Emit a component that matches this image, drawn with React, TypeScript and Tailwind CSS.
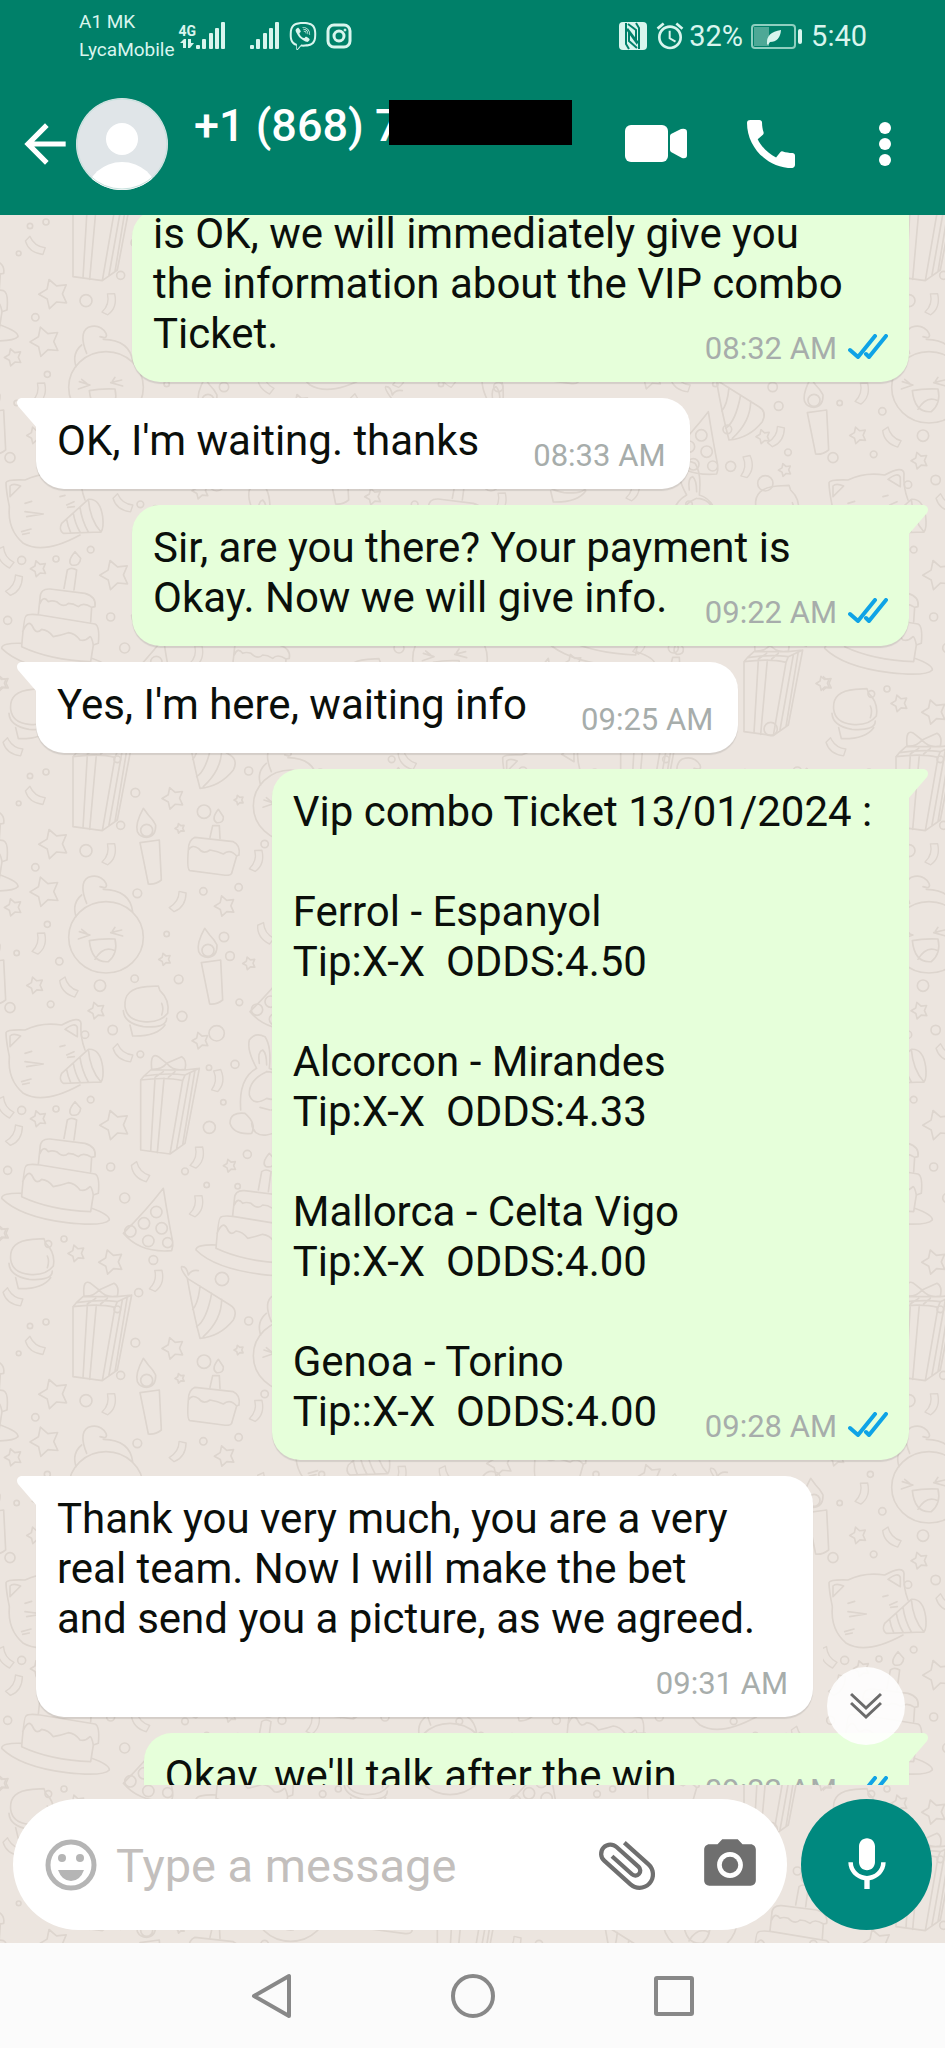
import type { ReactNode } from 'react';
import { FaViber } from 'react-icons/fa';
import {
  MdAlarm,
  MdArrowBack,
  MdAttachFile,
  MdCall,
  MdMic,
  MdPhotoCamera,
} from 'react-icons/md';

type Message = {
  id: number;
  out: boolean;
  text: string;
  time: string;
  size?: string;
  cut?: boolean;
};

const MESSAGES: Message[] = [
  {
    id: 1,
    out: true,
    cut: true,
    size: 'w-full',
    text: 'is OK, we will immediately give you\nthe information about the VIP combo\nTicket.',
    time: '08:32 AM',
  },
  { id: 2, out: false, text: "OK, I'm waiting. thanks", time: '08:33 AM' },
  {
    id: 3,
    out: true,
    text: 'Sir, are you there? Your payment is Okay. Now we will give info.',
    time: '09:22 AM',
  },
  { id: 4, out: false, text: "Yes, I'm here, waiting info", time: '09:25 AM' },
  {
    id: 5,
    out: true,
    size: 'min-w-[73%]',
    text: [
      'Vip combo Ticket 13/01/2024 :',
      '',
      'Ferrol - Espanyol',
      'Tip:X-X  ODDS:4.50',
      '',
      'Alcorcon - Mirandes',
      'Tip:X-X  ODDS:4.33',
      '',
      'Mallorca - Celta Vigo',
      'Tip:X-X  ODDS:4.00',
      '',
      'Genoa - Torino',
      'Tip::X-X  ODDS:4.00',
    ].join('\n'),
    time: '09:28 AM',
  },
  {
    id: 6,
    out: false,
    text: 'Thank you very much, you are a very\nreal team. Now I will make the bet\nand send you a picture, as we agreed.',
    time: '09:31 AM',
  },
  { id: 7, out: true, text: "Okay, we'll talk after the win", time: '09:32 AM' },
];

/* ---------- wallpaper ---------- */

const TILE_W = 2469;
const TILE_H = 1650;

const SHAPES: Record<string, { cx: number; cy: number; d: string }> = {
  cat: {
    cx: 150,
    cy: 115,
    d: 'M28 110Q18 60 18 38Q20 28 75 30Q125 5 185 15Q240 -15 243 10Q240 50 255 90M28 110Q22 180 70 220Q130 255 240 195M30 80V48Q40 38 62 48ZM195 28Q225 5 232 22V50ZM75 100l20 -6M75 125l55 7l-50 8M65 185l28 -8M68 193l20 -4M180 80l15 -4M200 105l22 -10M203 112l20 -2M265 88L185 160Q175 180 190 190L303 186M265 88Q300 85 308 140Q312 175 303 186M265 88Q270 150 303 186M240 112Q245 150 265 186M220 130q5 30 20 56M200 148q3 20 12 40',
  },
  cake: {
    cx: 165,
    cy: 430,
    d: 'M66 520Q5 518 5 535Q60 590 200 608Q310 620 328 600Q330 585 275 565M65 530Q72 440 78 438Q85 430 120 435L285 462Q300 468 295 520L280 525L272 575Q150 570 65 530M68 485Q85 445 98 470Q108 495 125 478Q145 480 160 500Q185 495 205 488Q225 490 240 510Q255 515 270 500Q275 500 280 525M115 432L120 385Q120 355 150 357L255 370Q290 380 285 410L275 412L272 455M120 400Q130 375 145 395Q155 390 170 395Q190 415 205 400Q220 400 235 410Q250 395 275 412M192 355L202 300Q215 290 230 300L222 360M225 245Q200 275 215 285Q240 290 242 265Z',
  },
  gift: {
    cx: 510,
    cy: 255,
    d: 'M422 180V390L510 402L555 370L598 145L555 165Q500 158 432 168L422 180Q500 170 548 182L555 165M548 182L510 402M465 175L452 394M492 175L472 398M570 160L530 385M585 150L548 375M432 168L452 150H555L598 145M465 172L490 155M505 172L525 155M455 148Q450 95 475 110L500 130L545 110Q562 120 555 148Q520 155 500 130Q485 150 455 148',
  },
  macaron: {
    cx: 438,
    cy: 812,
    d: 'M375 800Q370 745 440 740L475 738L480 752Q510 780 503 820Q480 850 430 845Q380 840 375 800M370 812Q372 850 430 860Q500 865 500 835M390 855L398 888Q470 890 495 855M485 790Q492 805 485 825',
  },
  pizza: {
    cx: 445,
    cy: 600,
    d: 'M490 505Q440 570 370 640Q420 700 515 692Q520 680 518 665Q505 600 490 505ZM452 576a17 17 0 1 0 34 0a17 17 0 1 0 -34 0M415 610a17 17 0 1 0 34 0a17 17 0 1 0 -34 0M468 625a17 17 0 1 0 34 0a17 17 0 1 0 -34 0M374 634a17 17 0 1 0 34 0a17 17 0 1 0 -34 0M428 663a17 17 0 1 0 34 0a17 17 0 1 0 -34 0M488 668a15 15 0 1 0 30 0a15 15 0 1 0 -30 0',
  },
  candle: {
    cx: 448,
    cy: 320,
    d: 'M430 205Q405 250 412 275Q420 292 440 292Q468 290 467 255Q460 240 445 225ZM422 271a18 18 0 1 0 36 0a18 18 0 1 0 -36 0M420 308L478 300L484 420Q465 435 445 432Z',
  },
  face: {
    cx: 318,
    cy: 555,
    d: 'M206 592a112 107 0 1 0 224 0a112 107 0 1 0 -224 0M260 490Q235 430 265 412Q300 400 318 430Q325 448 300 440M310 448Q390 450 398 515M245 465Q215 490 228 530M238 575L270 585L235 597M245 568l15 12M365 570L332 578L368 588M345 562l-8 12M268 602Q300 595 345 597Q355 640 325 665Q275 670 268 602ZM285 658Q310 615 345 632',
  },
  slice: {
    cx: 640,
    cy: 305,
    d: 'M565 330Q565 300 585 292L700 305Q722 315 717 345L710 348L695 400Q690 408 670 405L570 392Q560 390 565 330Q575 312 595 325Q610 345 630 330Q655 335 670 342Q690 325 710 348M630 292l8 -35h20l2 38M655 208Q632 238 650 248Q672 250 670 230Z',
  },
  hat: {
    cx: 628,
    cy: 850,
    d: 'M562 775Q580 880 600 955Q660 950 700 900Q715 870 690 855ZM600 798Q595 850 578 868M635 820Q620 900 590 920M665 838Q665 900 610 950M562 775Q540 745 545 740Q560 738 565 765Q575 748 595 752',
  },
  bunny: {
    cx: 780,
    cy: 200,
    d: 'M770 145Q740 90 748 60Q765 35 795 50Q815 80 808 145M778 130Q772 95 788 90Q800 100 800 135M770 145Q715 175 722 270M808 145Q860 160 872 250Q880 330 800 345Q760 350 755 310M800 155Q745 180 748 225Q760 260 800 235Q850 250 855 200Q840 155 800 155M735 280Q690 275 690 310Q700 345 755 340Q770 310 735 280M780 262l30 8M835 262l-20 8',
  },
};

// shape name, centre x, centre y
const PLACED: [string, number, number][] = [
  ['cat', 150, 955],
  ['cake', 165, 1270],
  ['gift', 510, 1095],
  ['gift', 307, 1775],
  ['macaron', 438, 812],
  ['macaron', 95, 1570],
  ['pizza', 445, 1440],
  ['candle', 448, 320],
  ['candle', 632, 680],
  ['face', 318, 555],
  ['slice', 640, 305],
  ['hat', 628, 1690],
  ['bunny', 780, 1040],
  ['cake', 748, 1425],
  ['face', 872, 160],
  ['pizza', 825, 775],
  ['cat', 1010, 480],
  ['candle', 1010, 830],
  ['gift', 1060, 1140],
  ['macaron', 1100, 1480],
  ['slice', 1180, 180],
  ['hat', 1240, 700],
  ['cake', 1330, 1000],
  ['face', 1350, 1370],
  ['gift', 1400, 330],
  ['bunny', 1480, 700],
  ['candle', 1560, 1180],
  ['pizza', 1600, 1500],
  ['cat', 1640, 130],
  ['slice', 1680, 480],
  ['macaron', 1700, 860],
  ['cake', 1800, 1250],
  ['hat', 1880, 330],
  ['gift', 1950, 60],
  ['slice', 2020, 1450],
  ['pizza', 2080, 760],
  ['bunny', 2070, 970],
  ['hat', 2215, 645],
  ['candle', 2450, 680],
  ['macaron', 2330, 960],
  ['gift', 2320, 1490],
  ['face', 2100, 200],
  ['cake', 2360, 270],
  ['cat', 2180, 1200],
];

// x, y, radius
const STARS: [number, number, number][] = [
  [162, 312, 46], [136, 455, 46], [40, 502, 27], [520, 175, 34], [540, 265, 15],
  [717, 180, 15], [675, 498, 32], [495, 658, 19], [748, 670, 20], [106, 736, 26],
  [290, 812, 26], [602, 902, 26], [116, 1136, 25], [345, 1155, 46], [690, 1277, 20],
  [230, 1540, 26], [334, 1566, 38], [5, 1480, 24], [900, 640, 28], [930, 1000, 22],
  [1180, 420, 34], [1120, 920, 26], [1500, 520, 40], [1240, 1230, 30], [1460, 1130, 28],
  [1790, 720, 34], [1480, 120, 28], [1800, 1010, 24], [1950, 560, 38], [1720, 1420, 28],
  [2355, 840, 20], [2290, 740, 22], [2200, 400, 34], [2470, 1480, 22], [2370, 1160, 44],
  [1960, 1180, 30], [2230, 1020, 22], [1270, 1560, 30], [880, 1580, 28],
];

// x, y, rotation
const STREAMERS: [number, number, number][] = [
  [105, 168, 0], [328, 342, 250], [535, 485, 265], [770, 362, 250], [118, 610, 250],
  [205, 742, 10], [795, 580, 20], [368, 940, 0], [652, 1022, 240], [44, 1186, 265],
  [592, 1252, 250], [420, 1296, 10], [590, 1398, 250], [470, 1622, 250], [38, 1672, 0],
  [15, 1102, 20], [930, 350, 30], [1200, 560, 250], [1080, 640, 0], [1340, 560, 20],
  [1500, 940, 250], [1220, 60, 10], [1540, 320, 265], [1660, 680, 10], [1900, 900, 250],
  [1480, 1560, 0], [1940, 730, 20], [2330, 740, 265], [2240, 830, 240], [2040, 580, 0],
  [2240, 120, 20], [1700, 1000, 0], [1920, 1360, 250], [2400, 1340, 10], [940, 1300, 250],
];

// x, y, radius
const DOTS: [number, number, number][] = [
  [352, 58, 10], [138, 96, 9], [90, 108, 8], [56, 190, 7], [406, 158, 13], [362, 256, 12],
  [258, 332, 18], [106, 382, 11], [612, 215, 20], [746, 93, 12], [794, 312, 11], [716, 442, 11],
  [610, 454, 11], [412, 460, 13], [142, 553, 9], [500, 582, 8], [672, 591, 14], [690, 648, 13],
  [178, 664, 11], [50, 639, 8], [404, 716, 11], [300, 737, 17], [536, 718, 13], [152, 793, 10],
  [30, 803, 15], [546, 829, 15], [718, 787, 10], [338, 870, 14], [255, 884, 11], [650, 880, 23],
  [421, 943, 10], [627, 983, 8], [705, 973, 12], [670, 1087, 8], [628, 1162, 18], [272, 1079, 10],
  [65, 1111, 12], [168, 1107, 9], [23, 1291, 12], [332, 1281, 12], [374, 1374, 15], [555, 1294, 10],
  [742, 1243, 12], [620, 1335, 8], [713, 1339, 8], [460, 1560, 13], [192, 1497, 9], [145, 1512, 10],
  [666, 1617, 20], [416, 1658, 12],
];

function starPath(r: number) {
  const pts: string[] = [];
  for (let i = 0; i < 10; i++) {
    const a = (Math.PI / 5) * i - 1.9;
    const len = i % 2 === 0 ? r : r * 0.55;
    pts.push(`${(Math.cos(a) * len).toFixed(1)} ${(Math.sin(a) * len).toFixed(1)}`);
  }
  return `M${pts.join('L')}Z`;
}

function Wallpaper() {
  return (
    <svg className="absolute inset-0 h-full w-full" aria-hidden="true">
      <defs>
        <g id="party">
          {PLACED.map(([name, x, y], i) => (
            <path
              key={i}
              d={SHAPES[name].d}
              transform={`translate(${x - SHAPES[name].cx} ${y - SHAPES[name].cy})`}
            />
          ))}
          {STARS.map(([x, y, r], i) => (
            <path key={i} d={starPath(r)} transform={`translate(${x} ${y})`} />
          ))}
          {STREAMERS.map(([x, y, rot], i) => (
            <path
              key={i}
              d="M-34 -18L-18 -34Q-2 2 36 6L28 30Q-22 24 -34 -18Z"
              transform={`translate(${x} ${y}) rotate(${rot}) scale(0.85)`}
            />
          ))}
          {[0, 823, 1646].map((shift) =>
            DOTS.map(([x, y, r], i) => (
              <circle key={`${shift}-${i}`} cx={x + shift} cy={y} r={r} />
            ))
          )}
        </g>
        <pattern
          id="tile"
          width={TILE_W}
          height={TILE_H}
          patternUnits="userSpaceOnUse"
          patternTransform="translate(0 -25) scale(0.33333)"
        >
          <g fill="none" stroke="#ddd5ce" strokeWidth="5" strokeLinejoin="round" strokeLinecap="round">
            <use href="#party" />
            <use href="#party" y={-TILE_H} />
            <use href="#party" x={-TILE_W} />
            <use href="#party" x={-TILE_W} y={-TILE_H} />
          </g>
        </pattern>
      </defs>
      <rect width="100%" height="100%" fill="url(#tile)" />
    </svg>
  );
}

/* ---------- status bar ---------- */

function SignalBars() {
  return (
    <svg className="h-7 w-[30px]" viewBox="0 0 30 28" fill="currentColor" aria-hidden="true">
      <rect x="0" y="23" width="4" height="4" rx="1" />
      <rect x="6" y="17" width="4" height="10" rx="1" />
      <rect x="13" y="11" width="4" height="16" rx="1" />
      <rect x="19" y="6" width="4" height="21" rx="1" />
      <rect x="25" y="0" width="4" height="27" rx="1" />
    </svg>
  );
}

function StatusBar() {
  return (
    <div className="flex h-[72px] items-center justify-between pr-[78px] pl-[79px] text-[#d9f5ee]">
      <div className="flex items-center">
        <div className="text-[19px] leading-7">
          <p>A1 MK</p>
          <p>LycaMobile</p>
        </div>
        <div className="ml-1 flex flex-col items-center">
          <span className="text-[14px] leading-[15px] font-bold">4G</span>
          <svg className="h-[10px] w-[14px]" viewBox="0 0 14 10" fill="currentColor" aria-hidden="true">
            <path d="M0 4L4 0H6V9H3V4Z M8 0H11V4H14L10 9H8Z" />
          </svg>
        </div>
        <SignalBars />
        <div className="ml-6 flex items-center gap-[9px]">
          <SignalBars />
          <FaViber className="h-[30px] w-[28px]" />
          <svg className="h-[26px] w-[26px]" viewBox="0 0 26 26" fill="none" stroke="currentColor" strokeWidth="3" aria-hidden="true">
            <rect x="2" y="2" width="22" height="22" rx="6" />
            <circle cx="13" cy="13" r="5" />
            <circle cx="19" cy="7" r="1" strokeWidth="1" fill="currentColor" />
          </svg>
        </div>
      </div>
      <div className="flex items-center text-[29px] leading-9">
        <svg className="h-7 w-7" viewBox="0 0 28 28" aria-hidden="true">
          <rect width="28" height="28" rx="4" fill="currentColor" />
          <path
            d="M7 1V22L10 27M7 6L17 20V8L9 2M20 27V6L17 1M20 22L10 9V19L18 26"
            fill="none"
            stroke="#008069"
            strokeWidth="2"
          />
        </svg>
        <MdAlarm className="ml-[7px] h-8 w-8" />
        <span className="ml-[3px]">32%</span>
        <svg className="ml-2 h-[25px] w-[51px]" viewBox="0 0 51 25" aria-hidden="true">
          <rect x="1" y="1" width="43" height="23" rx="3" fill="none" stroke="#8fcfc0" strokeWidth="2" />
          <rect x="3" y="3" width="15" height="19" fill="#4ea896" />
          <path d="M16 20Q15 8 30 6Q29 18 19 18L17 21Z" fill="currentColor" />
          <rect x="47" y="5" width="4" height="15" rx="2" fill="currentColor" />
        </svg>
        <span className="ml-[9px]">5:40</span>
      </div>
    </div>
  );
}

/* ---------- header ---------- */

function ChatHeader() {
  return (
    <div className="flex h-[143px] items-center pr-[30px] pl-[14px] text-white">
      <button type="button" aria-label="Back" className="shrink-0">
        <MdArrowBack className="h-[62px] w-[62px]" />
      </button>
      <svg className="h-[92px] w-[92px] shrink-0" viewBox="0 0 92 92" aria-hidden="true">
        <clipPath id="avatar">
          <circle cx="46" cy="46" r="46" />
        </clipPath>
        <g clipPath="url(#avatar)">
          <rect width="92" height="92" fill="#e0e5e8" />
          <circle cx="46" cy="41" r="16" fill="#fff" />
          <ellipse cx="46" cy="96" rx="35" ry="32" fill="#fff" />
        </g>
        <circle cx="46" cy="46" r="45" fill="none" stroke="#c5e0dc" strokeWidth="1" />
      </svg>
      <div className="ml-[26px] flex min-w-0 flex-1 items-center pb-[42px]">
        <h1 className="pt-[6px] text-[45px] leading-[52px] font-medium whitespace-nowrap">+1 (868) 7</h1>
        <span className="-ml-[12px] h-[45px] w-[183px] bg-black" />
      </div>
      <div className="flex items-center gap-[52px]">
        <button type="button" aria-label="Video call">
          <svg className="h-[37px] w-[62px]" viewBox="0 0 62 37" fill="currentColor" aria-hidden="true">
            <rect width="43" height="37" rx="6" />
            <path d="M45 11Q45 10 46 9L56 4Q62 3 62 7V30Q62 34 57 33L46 27Q45 26 45 25Z" />
          </svg>
        </button>
        <button type="button" aria-label="Voice call">
          <MdCall className="h-16 w-16" />
        </button>
        <button type="button" aria-label="More options" className="flex w-[60px] justify-center">
          <svg className="h-11 w-3" viewBox="0 0 12 44" fill="currentColor" aria-hidden="true">
            <circle cx="6" cy="6" r="6" />
            <circle cx="6" cy="22" r="6" />
            <circle cx="6" cy="38" r="6" />
          </svg>
        </button>
      </div>
    </div>
  );
}

/* ---------- messages ---------- */

function ReadTicks() {
  return (
    <svg
      className="h-[25px] w-10"
      viewBox="0 0 40 25"
      fill="none"
      stroke="#0fa3e6"
      strokeWidth="4"
      strokeLinecap="round"
      strokeLinejoin="round"
      role="img"
      aria-label="Read"
    >
      <path d="M2 16L10 23L27 2" />
      <path d="M18 20L21 23L38 2" />
    </svg>
  );
}

function Bubble({ message }: { message: Message }) {
  const { out, cut, size, text, time } = message;
  const side = out
    ? 'self-end bg-[#e6ffda] rounded-l-[28px] rounded-br-[28px]'
    : 'self-start bg-white rounded-r-[28px] rounded-bl-[28px]';

  return (
    <div
      className={`relative max-w-[89%] px-[21px] pb-[15px] shadow-[0_2px_1px_rgba(0,0,0,0.1)] ${side} ${
        cut ? '-mt-[6px]' : 'pt-[18px]'
      } ${size ?? ''}`}
    >
      {!cut && (
        <svg
          className={`absolute top-0 h-[30px] w-5 ${
            out ? '-right-[19px] -scale-x-100 text-[#e6ffda]' : '-left-[19px] text-white'
          }`}
          viewBox="0 0 20 30"
          fill="currentColor"
          aria-hidden="true"
        >
          <path d="M20 0H4Q-2 2 1 8L20 30Z" />
        </svg>
      )}
      <p className="text-[42px] leading-[50px] whitespace-pre-wrap text-[#0b0f0b]">
        {text}
        <span
          className={`float-right mt-[22px] flex items-baseline gap-[11px] text-[31px] leading-9 text-[#a7adab] ${
            out ? 'ml-7' : 'mr-1 ml-[54px]'
          }`}
        >
          {time}
          {out && <ReadTicks />}
        </span>
      </p>
    </div>
  );
}

/* ---------- composer ---------- */

function Composer() {
  return (
    <form className="relative flex gap-[14px] px-[13px] pt-[14px] pb-[13px]">
      <div className="flex h-[131px] min-w-0 flex-1 items-center rounded-full bg-white pr-[26px] pl-8">
        <button type="button" aria-label="Emoji" className="shrink-0">
          <svg className="h-[52px] w-[52px]" viewBox="0 0 52 52" fill="#b5b5b5" aria-hidden="true">
            <circle cx="26" cy="26" r="23" fill="none" stroke="#b5b5b5" strokeWidth="5" />
            <circle cx="17" cy="19" r="4" />
            <circle cx="35" cy="19" r="4" />
            <path d="M13 31H39Q35 42 26 42Q17 42 13 31Z" />
          </svg>
        </button>
        <input
          type="text"
          aria-label="Type a message"
          placeholder="Type a message"
          className="ml-[19px] min-w-0 flex-1 bg-transparent pt-[2px] text-[47px] leading-[56px] text-black outline-none placeholder:text-[#c3bfbd]"
        />
        <button type="button" aria-label="Attach" className="shrink-0 text-[#6f6f6f]">
          <MdAttachFile className="h-[68px] w-[68px] -rotate-48" />
        </button>
        <button type="button" aria-label="Camera" className="ml-[38px] shrink-0 text-[#6f6f6f]">
          <MdPhotoCamera className="h-[62px] w-[62px]" />
        </button>
      </div>
      <button
        type="button"
        aria-label="Record voice message"
        className="flex h-[131px] w-[131px] shrink-0 items-center justify-center rounded-full bg-[#00897f] text-white"
      >
        <MdMic className="h-16 w-16" />
      </button>
    </form>
  );
}

function NavButton({ label, children }: { label: string; children: ReactNode }) {
  return (
    <button type="button" aria-label={label} className="flex w-20 justify-center">
      <svg className="h-12 w-12" viewBox="0 0 48 48" fill="none" stroke="#888888" strokeWidth="4" strokeLinejoin="round">
        {children}
      </svg>
    </button>
  );
}

export default function App() {
  return (
    <div className="flex h-screen flex-col font-[Roboto,sans-serif]">
      <header className="bg-[#008069]">
        <StatusBar />
        <ChatHeader />
      </header>

      <div className="relative flex min-h-0 flex-1 flex-col bg-[#ece5df]">
        <Wallpaper />
        <main className="relative min-h-0 flex-1 overflow-hidden">
          <div className="flex flex-col gap-4 px-9">
            {MESSAGES.map((m) => (
              <Bubble key={m.id} message={m} />
            ))}
          </div>
          <button
            type="button"
            aria-label="Scroll to bottom"
            className="absolute right-10 bottom-10 flex h-[78px] w-[78px] items-center justify-center rounded-full bg-white/90"
          >
            <svg className="h-8 w-8" viewBox="0 0 32 32" fill="none" stroke="#6b6b6b" strokeWidth="3" aria-hidden="true">
              <path d="M1 4L16 18L31 4M1 13L16 27L31 13" />
            </svg>
          </button>
        </main>
        <Composer />
      </div>

      <nav className="flex h-[105px] items-center justify-center gap-[121px] bg-[#fbfbfb]">
        <NavButton label="Back">
          <path d="M41 4V44L6 24Z" />
        </NavButton>
        <NavButton label="Home">
          <circle cx="24" cy="24" r="20" />
        </NavButton>
        <NavButton label="Recent apps">
          <rect x="6" y="6" width="36" height="36" rx="1" />
        </NavButton>
      </nav>
    </div>
  );
}
